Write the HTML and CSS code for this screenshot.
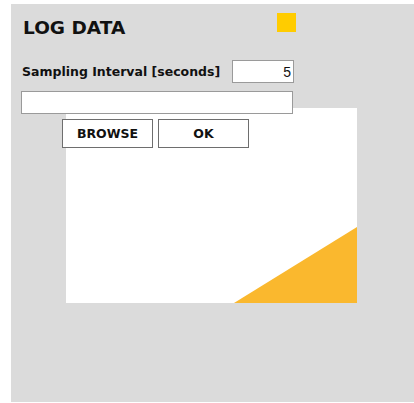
FILE: index.html
```html
<!DOCTYPE html>
<html lang="en">
<head>
<meta charset="utf-8">
<title>Log Data</title>
<link rel="stylesheet" href="styles.css">
</head>
<body>
<main class="panel">
  <header class="panel-head">
    <h1 class="title">LOG DATA</h1>
    <span class="status-led"></span>
  </header>

  <div class="field-row">
    <label class="field-label" for="interval">Sampling Interval [seconds]</label>
    <input class="num-input" id="interval" type="text" value="5">
  </div>

  <input class="path-input" type="text" value="">

  <section class="stage">
    <div class="preview">
      <svg class="preview-art" viewBox="0 0 291 195" preserveAspectRatio="none" aria-hidden="true">
        <polygon points="291,119 291,195 168,195" fill="#fab82e"/>
      </svg>
    </div>
    <div class="actions">
      <button class="btn" type="button">BROWSE</button>
      <button class="btn" type="button">OK</button>
    </div>
  </section>
</main>
</body>
</html>
```

FILE: styles.css
```css
html, body {
  margin: 0;
  padding: 0;
  background: #ffffff;
}

body {
  font-family: "DejaVu Sans", "Liberation Sans", sans-serif;
  color: #111111;
}

.panel {
  box-sizing: border-box;
  margin: 4px 0 0 11px;
  height: 398px;
  padding: 9px 0 0 10px;
  background: #dbdbdb;
}

.panel-head {
  display: flex;
  justify-content: space-between;
  align-items: flex-start;
  width: 275px;
}

.title {
  margin: 4px 0 0 2px;
  font-size: 18.5px;
  line-height: 22px;
  font-weight: bold;
  letter-spacing: 0;
}

.status-led {
  display: block;
  width: 19px;
  height: 19px;
  background: #ffcc00;
}

.field-row {
  display: flex;
  align-items: center;
  justify-content: space-between;
  width: 273px;
  margin-top: 21px;
  height: 23px;
}

.field-label {
  padding-left: 1px;
  font-size: 12.5px;
  font-weight: bold;
  line-height: 15px;
}

.num-input,
.path-input {
  box-sizing: border-box;
  height: 23px;
  margin: 0;
  border: 1px solid #9a9a9a;
  background: #ffffff;
  outline: none;
}

.num-input {
  width: 62px;
  padding: 0 2px 0 0;
  text-align: right;
  font-family: "Liberation Sans", Arial, sans-serif;
  font-size: 14px;
  color: #111111;
}

/* the path field sits above the preview that slides up under it */
.path-input {
  position: relative;
  z-index: 1;
  display: block;
  width: 272px;
  margin-top: 8px;
  padding: 0 3px;
}

.stage {
  position: relative;
  margin: -6px 0 0 45px;
  width: 291px;
}

.preview {
  width: 291px;
  height: 195px;
  background: #ffffff;
}

.preview-art {
  display: block;
  width: 100%;
  height: 100%;
}

.actions {
  position: absolute;
  top: 11px;
  left: -4px;
  display: flex;
  gap: 5px;
}

.btn {
  box-sizing: border-box;
  width: 91px;
  height: 29px;
  margin: 0;
  padding: 0;
  border: 1px solid #6e6e6e;
  background: #ffffff;
  font-family: "DejaVu Sans", "Liberation Sans", sans-serif;
  font-size: 12.5px;
  font-weight: bold;
  color: #111111;
  cursor: pointer;
}
```
